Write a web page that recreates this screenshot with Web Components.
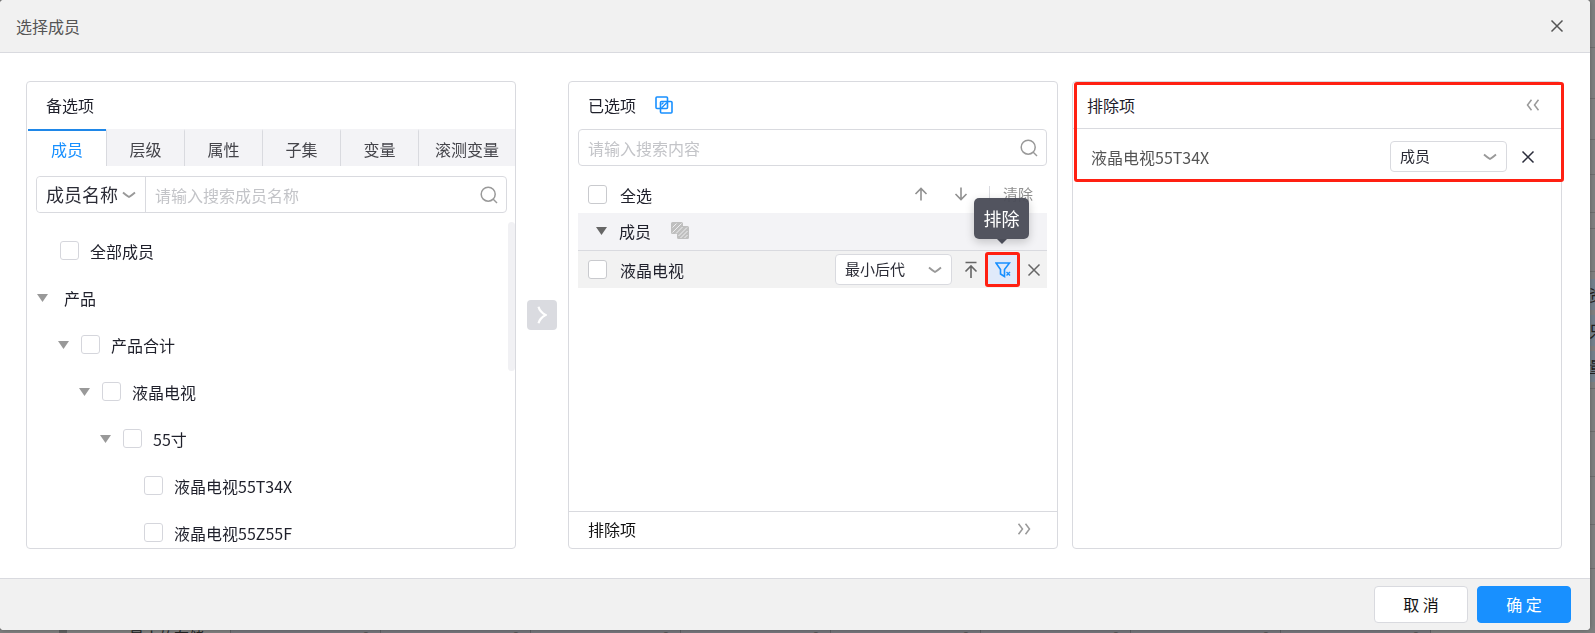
<!DOCTYPE html>
<html lang="zh-CN">
<head>
<meta charset="utf-8">
<title>选择成员</title>
<style>
html,body{margin:0;height:100%}
body{background:#7f7f7f;overflow:hidden;font-family:"Noto Sans CJK SC",sans-serif;font-size:16px;color:#1f202b}
</style>
</head>
<body>
<sheet-backdrop></sheet-backdrop>
<member-dialog></member-dialog>
<script>
const BASE=`*{box-sizing:border-box}
button,input,select{font:inherit;color:inherit;margin:0;outline:none}
button{border:0;background:none;padding:0;cursor:pointer}
svg{display:block;fill:none;stroke:currentColor}
.check{appearance:none;flex:none;width:19px;height:19px;border:1px solid #d5d6dc;border-radius:3px;background:#fff}
`;
function define(name,css,html,setup){
  const t=document.createElement('template');
  t.innerHTML='<style>'+BASE+css+'</style>'+html;
  customElements.define(name,class extends HTMLElement{
    constructor(){super();this.attachShadow({mode:'open'});}
    connectedCallback(){
      if(this.shadowRoot.childNodes.length)return;
      this.shadowRoot.append(t.content.cloneNode(true));
      if(setup)setup(this,this.shadowRoot);
    }
  });
}

const ICONS={
  close:['0 0 14 14','<path d="M1.500 1.500l11 11M12.500 1.500L1.500 12.500" stroke-width="1.500"/>'],
  chevron:['0 0 14 8','<path d="M1 1.500c2 1.800 4 3.200 6 4.500c2-1.300 4-2.700 6-4.500" stroke-width="1.800"/>'],
  search:['0 0 18 18','<circle cx="8.200" cy="8.200" r="7" stroke-width="1.500"/><path d="M13 13l4 4" stroke-width="1.500"/>'],
  up:['0 0 14 14','<path d="M7 13.500V1.500M1.500 7L7 1.500L12.500 7" stroke-width="1.600"/>'],
  down:['0 0 14 14','<path d="M7 .5V12.500M1.500 7L7 12.500L12.500 7" stroke-width="1.600"/>'],
  top:['0 0 14 18','<path d="M1.500 1.500h11M7 17V5M1.500 10.500L7 5l5.500 5.500" stroke-width="1.600"/>'],
  left2:['0 0 14 12','<path d="M5.500 .7L1.500 6l4 5.300M12.500 .7L8.500 6l4 5.300" stroke-width="1.500"/>'],
  right2:['0 0 14 12','<path d="M1.500 .7L5.500 6l-4 5.300M8.500 .7L12.500 6l-4 5.300" stroke-width="1.500"/>'],
  caret:['0 0 11 8','<path d="M0 0h11L5.500 8z" fill="currentColor" stroke="none"/>'],
  move:['0 0 10 18','<path d="M1.500 .8C2.300 4 5 7 8.500 9C5 11 2.300 14 1.500 17.200" stroke-width="2.200"/>'],
  intersect:['0 0 18 18','<rect x="1" y="1" width="11.500" height="11.500" rx="1" stroke-width="1.600"/><rect x="5.500" y="5.500" width="11.500" height="11.500" rx="1" stroke-width="1.600"/><path d="M6.500 8.500L8.500 6.500M6.500 12L12 6.500" stroke-width="1.300"/>'],
  union:['0 0 18 17','<path d="M1.500 0h9q1.500 0 1.500 1.500V4h4.500Q18 4 18 5.500v10q0 1.500-1.500 1.500h-9Q6 17 6 15.500V12H1.500Q0 12 0 10.500v-9Q0 0 1.500 0z" fill="#bfbfbf" stroke="none"/><path d="M1.500 5.500l4-4M1.500 10.500l9-9M5 11.500L11.500 5M7.500 14L16 5.500M9.500 16l7-7M13.500 16l3-3" stroke="#f3f3f5" stroke-width=".9"/>'],
  filter:['0 0 16 16','<path d="M1 1h13.500L9.500 7.500v7l-4-2.500V7.500z" stroke-width="1.600"/><path d="M11.500 10l3.500 3.500M15 10l-3.500 3.500" stroke-width="1.400"/>']
};
define('ui-icon',':host{display:block;flex:none}','<svg aria-hidden="true"></svg>',(el,r)=>{
  const [box,body]=ICONS[el.getAttribute('name')],s=r.querySelector('svg'),d=box.split(' ');
  s.setAttribute('viewBox',box);s.setAttribute('width',d[2]);s.setAttribute('height',d[3]);
  s.innerHTML=body;
});

define('sheet-backdrop',`:host{position:fixed;inset:0;overflow:hidden;display:grid;grid-template:1fr 4px / 1fr 8px;background:#7f7f7f;color:#222}
.side{grid-area:1/2;display:flex;flex-direction:column;min-height:0;overflow:hidden}
.side i{flex:none;height:var(--h);border-bottom:1px solid #6d6d6d}
.side b{flex:none;height:31px;margin-bottom:5px;padding-left:2px;background:#73808c;font-weight:400;line-height:31px;overflow:hidden;white-space:nowrap}
.side b:first-of-type{margin-top:7px}
.bottom{grid-area:2/1/3/3;display:flex;background:#75757b;overflow:hidden;font-size:15px;line-height:15px}
.bottom span{flex:none;height:20px;border-right:1px solid #5f5f63}
.head{width:60px;background:#7f7f7f}
.grip{width:7px;background:#5f5f5f}
.name{width:164px;padding-left:62px;background:#7f7f7f}
.cell{width:150px;text-align:right;padding-right:10px;color:#555}
.rest{flex:1;background:#7f7f7f}`,
`<div class="side"><i style="--h:48px"></i><i style="--h:51px"></i><i style="--h:41px"></i><i style="--h:35px"></i><i style="--h:38px"></i><i style="--h:16px"></i><i style="--h:43px"></i><b>资</b><b>只</b><b>量</b><i style="--h:2px"></i><i style="--h:43px"></i><i style="--h:45px"></i><i style="--h:48px"></i><i style="--h:44px"></i></div>
<div class="bottom"><span class="head"></span><span class="grip"></span><span class="name">最小的存储</span><span class="cell">0</span><span class="cell">0</span><span class="cell">0</span><span class="cell">0</span><span class="cell">0</span><span class="cell">0</span><span class="cell">0</span><span class="cell">0</span><div class="rest"></div></div>`);

define('ui-search',`:host{display:flex;height:37px;border:1px solid #d9dadf;border-radius:4px;background:#fff;align-items:center;padding-right:8px}
label{flex:1;display:flex;align-items:center;color:#999}
input{flex:1;min-width:0;border:0;background:none;padding:0 9px;height:35px}
input::placeholder{color:#c3c4c8;opacity:1}`,
`<slot></slot><label><input type="text"><ui-icon name="search"></ui-icon></label>`,(el,r)=>{
  const i=r.querySelector('input');i.placeholder=el.getAttribute('placeholder');i.setAttribute('aria-label',i.placeholder);
});

define('ui-select',`:host{display:flex;position:relative;align-items:center;width:117px;height:31px;border:1px solid #d9dadf;border-radius:4px;background:#fff;font-size:15px;color:#2b2c36}
:host([plain]){width:109px;height:35px;border-width:0 1px 0 0;border-radius:4px 0 0 4px;font-size:18px}
select{appearance:none;border:0;background:none;width:100%;height:100%;padding:0 9px 2px}
ui-icon{position:absolute;right:9px;color:#999;pointer-events:none}`,
`<select><option></option></select><ui-icon name="chevron"></ui-icon>`,(el,r)=>{
  r.querySelector('option').textContent=el.getAttribute('value');
  r.querySelector('select').setAttribute('aria-label',el.getAttribute('label'));
});

define('ui-panel',`:host{display:flex;flex-direction:column;flex:1;min-width:0;border:1px solid #d9dadf;border-radius:4px;background:#fff;overflow:hidden}
:host([marked]){overflow:visible;position:relative}
header{display:flex;align-items:center;flex:none;height:47px;padding:0 19px 2px;gap:19px;line-height:24px}
:host([marked]) header{height:46px;padding-bottom:0}`,
`<header><slot name="title"></slot></header><slot></slot>`);

define('member-tabs',`:host{display:flex;flex:none;height:37px;background:#f3f3f6;margin-left:1px;color:#44444a}
button{width:78px;border-top:2px solid transparent;border-left:1px solid #d9dadf;background:#f3f3f6;background-clip:padding-box}
button:last-child{flex:1}
button[aria-selected=true]{border-left:0;background:#fff;border-top-color:#1f87e8;color:#1890ff}`,
`<button role="tab" aria-selected="true">成员</button><button role="tab">层级</button><button role="tab">属性</button><button role="tab">子集</button><button role="tab">变量</button><button role="tab">滚测变量</button>`);

define('tree-row',`:host{display:flex;align-items:center;flex:none;height:47px}
.caret{width:11px;margin-right:12px;color:#999}
label{display:flex;align-items:center;gap:11px}
.plain{margin-left:4px}`,``,(el,r)=>{
  const level=+el.getAttribute('level'),kind=el.getAttribute('kind');
  el.style.paddingLeft=(10+21*level)+'px';
  const b=kind==='leaf'?'<span class="caret"></span>':'<button class="caret" aria-label="收起"><ui-icon name="caret"></ui-icon></button>';
  r.innerHTML+=b+(kind==='root'?'<span class="plain"><slot></slot></span>':'<label><input class="check" type="checkbox"><slot></slot></label>');
});

define('member-source',`:host{display:contents}
ui-search{margin:10px 8px 0 9px;flex:none}
.tree{flex:1;min-height:0;overflow:hidden;position:relative;padding-top:14px}
.thumb{position:absolute;right:0;top:9px;width:7px;height:149px;border-radius:4px;background:#f1f1f4}`,
`<ui-panel><span slot="title">备选项</span><member-tabs></member-tabs>
<ui-search placeholder="请输入搜索成员名称"><ui-select plain value="成员名称" label="搜索字段"></ui-select></ui-search>
<div class="tree"><tree-row level="0" kind="leaf">全部成员</tree-row><tree-row level="0" kind="root">产品</tree-row><tree-row level="1">产品合计</tree-row><tree-row level="2">液晶电视</tree-row><tree-row level="3">55寸</tree-row><tree-row level="4" kind="leaf">液晶电视55T34X</tree-row><tree-row level="4" kind="leaf">液晶电视55Z55F</tree-row><div class="thumb"></div></div></ui-panel>`);

define('selected-members',`:host{display:contents}
ui-search{margin:0 10px 0 9px;flex:none}
.blue{color:#1890ff}
.list{flex:1;margin:0 10px 0 9px}
.row{display:flex;align-items:center;height:38px;padding:0 6px 0 10px}
.all{height:47px;padding:12px 14px 2px 10px}
label{display:flex;align-items:center;gap:13px;flex:1}
.check{border-color:#c9cace}
.tools{display:flex;align-items:center;color:#909090;font-size:15px;line-height:20px;padding-bottom:2px}
.tools button+button{margin-left:26px}
.bar{width:1px;height:15px;background:#d9dadf;margin:0 13px 0 21px}
.group{background:#f3f3f6;border-bottom:1px solid #d9dadf;padding:0 0 2px 18px}
.group button{color:#666;margin-right:12px}
.group ui-icon[name=union]{margin-left:20px}
.item{background:#f2f2f2;height:37px}
.item button{color:#666}
.item .top{margin:0 7px 0 12px}
.item .exclude{position:relative;display:grid;place-items:center;width:35px;height:35px;border:3px solid #ff2012;border-radius:3px;background:#e0eafa;color:#1890ff;margin-right:7px}
.tip{position:absolute;left:-14px;bottom:45px;width:55px;height:41px;line-height:41px;border-radius:5px;background:#4b4d58f5;color:#fff;font-size:18px;text-align:center;box-shadow:0 3px 10px #0003}
.tip::after{content:"";position:absolute;left:50%;top:100%;margin-left:-5px;border:5px solid transparent;border-top-color:#4b4d58;border-bottom:0}
footer{flex:none;display:flex;align-items:center;justify-content:space-between;height:37px;border-top:1px solid #d9dadf;padding:0 26px 2px 19px;color:#111}
footer button{color:#999}`,
`<ui-panel><span slot="title">已选项</span><ui-icon slot="title" name="intersect" class="blue"></ui-icon>
<ui-search placeholder="请输入搜索内容"></ui-search>
<div class="list">
<div class="row all"><label><input class="check" type="checkbox">全选</label><div class="tools"><button aria-label="上移"><ui-icon name="up"></ui-icon></button><button aria-label="下移"><ui-icon name="down"></ui-icon></button><span class="bar"></span><button>清除</button></div></div>
<div class="row group"><button aria-label="收起"><ui-icon name="caret"></ui-icon></button>成员<ui-icon name="union"></ui-icon></div>
<div class="row item"><label><input class="check" type="checkbox">液晶电视</label><ui-select value="最小后代" label="成员范围"></ui-select><button class="top" aria-label="置顶"><ui-icon name="top"></ui-icon></button><button class="exclude" aria-describedby="tip"><ui-icon name="filter"></ui-icon><span class="tip" role="tooltip" id="tip">排除</span></button><button aria-label="移除"><ui-icon name="close"></ui-icon></button></div>
</div>
<footer>排除项<button aria-label="展开排除项"><ui-icon name="right2"></ui-icon></button></footer></ui-panel>`);

define('excluded-members',`:host{display:contents}
.title{flex:1;margin-left:-5px}
.collapse{color:#999;margin-right:2px}
.row{display:flex;align-items:center;height:56px;border-top:1px solid #d9dadf;padding:0 26px 0 18px}
.name{flex:1;color:#555}
.row button{margin-left:14px;color:#2b2d3b}
.mark{position:absolute;left:1px;right:-3px;top:0;height:100px;border:3px solid #ff2012;border-radius:3px;pointer-events:none}`,
`<ui-panel marked><span slot="title" class="title">排除项</span><button slot="title" class="collapse" aria-label="收起排除项"><ui-icon name="left2"></ui-icon></button>
<div class="row"><span class="name">液晶电视55T34X</span><ui-select value="成员" label="排除范围"></ui-select><button aria-label="移除"><ui-icon name="close"></ui-icon></button></div>
<div class="mark"></div></ui-panel>`);

define('member-dialog',`:host{position:relative;display:flex;flex-direction:column;height:calc(100% - 3px);margin-right:5px;background:#fff;border-radius:4px;box-shadow:0 0 4px #0004;overflow:hidden}
.head{display:flex;align-items:center;justify-content:space-between;flex:none;height:53px;padding:0 26px 0 16px;background:#f1f1f1;border-bottom:1px solid #d9dadf;color:#555}
h1{font:inherit;margin:0}
main{flex:1;min-height:0;display:flex;padding:28px 28px 29px 26px}
.move{flex:none;align-self:center;width:30px;height:30px;margin:0 11px;border-radius:4px;background:#dadbe0;color:#fff;display:grid;place-items:center}
.gap{flex:none;width:14px}
footer{flex:none;display:flex;justify-content:flex-end;gap:9px;height:52px;border-top:1px solid #d9dadf;background:#f1f1f1;padding:7px 19px 0}
footer button{width:94px;height:37px;border:1px solid #d9dadf;border-radius:4px;background:#fff;color:#111;padding-bottom:2px}
footer .ok{background:#1890ff;border-color:#1890ff;color:#fff}`,
`<div class="head"><h1>选择成员</h1><button aria-label="关闭"><ui-icon name="close"></ui-icon></button></div>
<main><member-source></member-source><button class="move" aria-label="添加"><ui-icon name="move"></ui-icon></button><selected-members></selected-members><span class="gap"></span><excluded-members></excluded-members></main>
<footer><button>取 消</button><button class="ok">确 定</button></footer>`);
</script>
</body>
</html>
